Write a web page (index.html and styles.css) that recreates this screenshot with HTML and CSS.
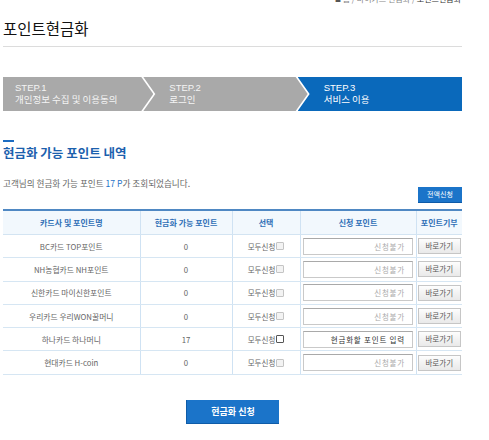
FILE: index.html
```html
<!DOCTYPE html>
<html>
<head>
  <meta charset="utf-8">
  <link rel="stylesheet" href="styles.css">
</head>
<body>
  <div class="wrap">
    <!-- 경로 -->
    <div class="location"><span class="home">■</span> 홈 / 마이카드 현금화 / <strong>포인트현금화</strong></div>

    <h1 class="page-title">포인트현금화</h1>

    <!-- 단계 -->
    <ol class="steps">
      <li class="step first">
        <span class="step-no">STEP.1</span>
        <span class="step-name">개인정보 수집 및 이용동의</span>
      </li>
      <li class="step">
        <span class="step-no">STEP.2</span>
        <span class="step-name">로그인</span>
      </li>
      <li class="step last on">
        <span class="step-no">STEP.3</span>
        <span class="step-name">서비스 이용</span>
      </li>
    </ol>

    <!-- 포인트 내역 -->
    <h2 class="sec-title">현금화 가능 포인트 내역</h2>
    <p class="info">고객님의 현금화 가능 포인트 <em>17 P</em>가 조회되었습니다.</p>
    <div class="btn-right">
      <button class="btn-blue-s" type="button">전액신청</button>
    </div>

    <table class="point-table">
      <colgroup>
        <col style="width:137px">
        <col style="width:92px">
        <col style="width:68px">
        <col style="width:116px">
        <col style="width:46px">
      </colgroup>
      <thead>
        <tr>
          <th>카드사 및 포인트명</th>
          <th>현금화 가능 포인트</th>
          <th>선택</th>
          <th>신청 포인트</th>
          <th>포인트기부</th>
        </tr>
      </thead>
      <tbody>
        <tr>
          <td>BC카드 TOP포인트</td>
          <td>0</td>
          <td><label class="chk">모두신청<input type="checkbox" disabled></label></td>
          <td><input class="txt" type="text" placeholder="신청불가" disabled></td>
          <td><button class="btn-gray" type="button">바로가기</button></td>
        </tr>
        <tr>
          <td>NH농협카드 NH포인트</td>
          <td>0</td>
          <td><label class="chk">모두신청<input type="checkbox" disabled></label></td>
          <td><input class="txt" type="text" placeholder="신청불가" disabled></td>
          <td><button class="btn-gray" type="button">바로가기</button></td>
        </tr>
        <tr>
          <td>신한카드 마이신한포인트</td>
          <td>0</td>
          <td><label class="chk">모두신청<input type="checkbox" disabled></label></td>
          <td><input class="txt" type="text" placeholder="신청불가" disabled></td>
          <td><button class="btn-gray" type="button">바로가기</button></td>
        </tr>
        <tr>
          <td>우리카드 우리WON꿀머니</td>
          <td>0</td>
          <td><label class="chk">모두신청<input type="checkbox" disabled></label></td>
          <td><input class="txt" type="text" placeholder="신청불가" disabled></td>
          <td><button class="btn-gray" type="button">바로가기</button></td>
        </tr>
        <tr>
          <td>하나카드 하나머니</td>
          <td>17</td>
          <td><label class="chk">모두신청<input type="checkbox"></label></td>
          <td><input class="txt active" type="text" placeholder="현금화할 포인트 입력"></td>
          <td><button class="btn-gray" type="button">바로가기</button></td>
        </tr>
        <tr>
          <td>현대카드 H-coin</td>
          <td>0</td>
          <td><label class="chk">모두신청<input type="checkbox" disabled></label></td>
          <td><input class="txt" type="text" placeholder="신청불가" disabled></td>
          <td><button class="btn-gray" type="button">바로가기</button></td>
        </tr>
      </tbody>
    </table>

    <div class="btn-center">
      <button class="btn-blue" type="button">현금화 신청</button>
    </div>
  </div>
</body>
</html>
```

FILE: styles.css
```css
/* 기본 */
body {
  margin: 0;
  background: #fff;
  font-family: "Noto Sans CJK KR", "Noto Sans", sans-serif;
  color: #666;
}

.wrap {
  width: 459px;
  margin-left: 3px;
}

/* 경로 */
.location {
  margin-top: -6px;
  padding-right: 1px;
  text-align: right;
  font-size: 8px;
  line-height: 10px;
  color: #888;
}

.location .home {
  font-size: 6px;
  color: #555;
}

.location strong {
  font-weight: normal;
  color: #333;
}

/* 페이지 제목 */
.page-title {
  margin: 13px 0 0;
  padding-bottom: 8px;
  border-bottom: 1px solid #dcdcdc;
  font-size: 15.5px;
  line-height: 20px;
  font-weight: normal;
  color: #111;
}

/* 단계 표시 */
.steps {
  display: flex;
  margin: 30px 0 0;
  padding: 0;
  list-style: none;
  height: 34px;
}

.step {
  flex: 1;
  display: flex;
  flex-direction: column;
  justify-content: center;
  margin-left: -10px;
  padding-left: 26px;
  background: #a9a9a9;
  color: #f4f4f4;
  font-size: 9.5px;
  line-height: 12px;
  clip-path: polygon(0 0, calc(100% - 12px) 0, 100% 50%, calc(100% - 12px) 100%, 0 100%, 12px 50%);
}

.step.first {
  margin-left: 0;
  padding-left: 12px;
  clip-path: polygon(0 0, calc(100% - 12px) 0, 100% 50%, calc(100% - 12px) 100%, 0 100%);
}

.step.last {
  clip-path: polygon(0 0, 100% 0, 100% 100%, 0 100%, 12px 50%);
}

.step.on {
  background: #0a69bb;
  color: #fff;
}

.step-no {
  font-family: "Liberation Sans", "Noto Sans CJK KR", sans-serif;
  line-height: 10px;
}

/* 섹션 제목 */
.sec-title {
  margin: 29px 0 0;
  font-size: 12.5px;
  line-height: 16px;
  font-weight: bold;
  color: #1c60ad;
}

.sec-title::before {
  content: "";
  display: block;
  width: 11px;
  height: 2px;
  margin-bottom: 3px;
  background: #1c6cc2;
}

.info {
  margin: 17px 0 0;
  font-size: 8.6px;
  line-height: 10px;
  color: #666;
}

.info em {
  font-style: normal;
  color: #1f74c9;
}

.btn-right {
  display: flex;
  justify-content: flex-end;
  margin-top: -1px;
}

.btn-blue-s {
  width: 44px;
  height: 16px;
  padding: 0;
  border: 0;
  border-bottom: 1px solid #0d5aa8;
  background: #1b74c9;
  color: #fff;
  font-family: inherit;
  font-size: 7px;
  line-height: 15px;
}

/* 포인트 표 */
.point-table {
  width: 459px;
  margin-top: 6px;
  border-collapse: collapse;
  table-layout: fixed;
  border-top: 2px solid #4f88c3;
  border-bottom: 1px solid #98b9d6;
}

.point-table th {
  height: 23px;
  padding: 0;
  background: #f2f8fd;
  border-left: 1px solid #cfe2f3;
  border-bottom: 1px solid #d3e4f2;
  color: #2f6fb6;
  font-size: 8px;
  font-weight: bold;
  white-space: nowrap;
}

.point-table td {
  height: 22.3px;
  padding: 0;
  border-left: 1px solid #cfe2f3;
  border-bottom: 1px solid #d6e6f3;
  text-align: center;
  font-size: 7.8px;
  color: #666;
  white-space: nowrap;
}

.point-table th:first-child,
.point-table td:first-child {
  border-left: 0;
}

.chk {
  display: inline-flex;
  align-items: center;
  gap: 1px;
  font-size: 7.5px;
  color: #666;
}

.chk input {
  appearance: none;
  box-sizing: border-box;
  width: 8px;
  height: 8px;
  margin: 0;
  border: 1px solid #555;
  border-radius: 1px;
  background: #fff;
}

.chk input:disabled {
  border-color: #c4c4c4;
  background: #f3f3f3;
}

.txt {
  display: block;
  box-sizing: border-box;
  width: 110px;
  height: 17px;
  margin: 0 auto;
  padding: 0 7px 0 0;
  border: 1px solid #c9c9c9;
  border-top-color: #a9a9a9;
  background: #fff;
  text-align: right;
  font-family: inherit;
  font-size: 7.5px;
  letter-spacing: 0.8px;
}

.txt::placeholder {
  color: #aaa;
}

.txt.active::placeholder {
  color: #333;
}

.btn-gray {
  display: block;
  width: 43px;
  height: 16px;
  margin: 0 auto;
  padding: 0;
  border: 1px solid #c6c6c6;
  background: linear-gradient(#fdfdfd, #e9e9e9);
  color: #555;
  font-family: inherit;
  font-size: 7.5px;
  line-height: 14px;
}

/* 하단 버튼 */
.btn-center {
  display: flex;
  justify-content: center;
  margin-top: 25px;
}

.btn-blue {
  width: 93px;
  height: 24px;
  padding: 0;
  border: 0;
  border-left: 1px solid #0f5ca8;
  border-bottom: 1px solid #0f5ca8;
  background: #1b74c9;
  color: #fff;
  font-family: inherit;
  font-size: 9px;
  font-weight: bold;
}
```
